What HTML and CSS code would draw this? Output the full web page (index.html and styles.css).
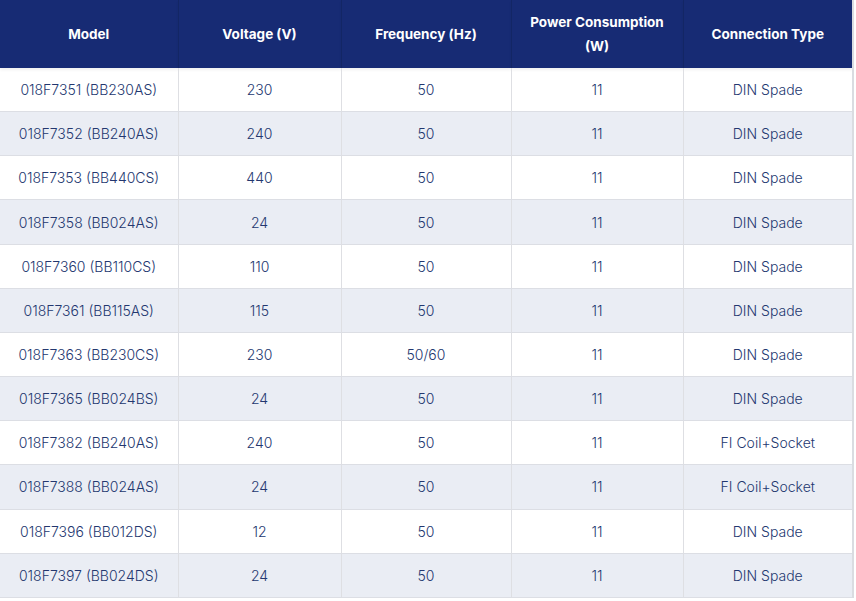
FILE: index.html
```html
<!DOCTYPE html>
<html lang="en">
<head>
<meta charset="utf-8">
<title>Models</title>
<link rel="stylesheet" href="styles.css">
</head>
<body>
<table class="spec">
  <colgroup>
    <col class="c1"><col class="c2"><col class="c3"><col class="c4"><col class="c5">
  </colgroup>
  <thead>
    <tr>
      <th>Model</th>
      <th>Voltage (V)</th>
      <th>Frequency (Hz)</th>
      <th>Power Consumption<br>(W)</th>
      <th>Connection Type</th>
    </tr>
  </thead>
  <tbody>
    <tr><td>018F7351 (BB230AS)</td><td>230</td><td>50</td><td>11</td><td>DIN Spade</td></tr>
    <tr><td>018F7352 (BB240AS)</td><td>240</td><td>50</td><td>11</td><td>DIN Spade</td></tr>
    <tr><td>018F7353 (BB440CS)</td><td>440</td><td>50</td><td>11</td><td>DIN Spade</td></tr>
    <tr><td>018F7358 (BB024AS)</td><td>24</td><td>50</td><td>11</td><td>DIN Spade</td></tr>
    <tr><td>018F7360 (BB110CS)</td><td>110</td><td>50</td><td>11</td><td>DIN Spade</td></tr>
    <tr><td>018F7361 (BB115AS)</td><td>115</td><td>50</td><td>11</td><td>DIN Spade</td></tr>
    <tr><td>018F7363 (BB230CS)</td><td>230</td><td>50/60</td><td>11</td><td>DIN Spade</td></tr>
    <tr><td>018F7365 (BB024BS)</td><td>24</td><td>50</td><td>11</td><td>DIN Spade</td></tr>
    <tr><td>018F7382 (BB240AS)</td><td>240</td><td>50</td><td>11</td><td>FI Coil+Socket</td></tr>
    <tr><td>018F7388 (BB024AS)</td><td>24</td><td>50</td><td>11</td><td>FI Coil+Socket</td></tr>
    <tr><td>018F7396 (BB012DS)</td><td>12</td><td>50</td><td>11</td><td>DIN Spade</td></tr>
    <tr><td>018F7397 (BB024DS)</td><td>24</td><td>50</td><td>11</td><td>DIN Spade</td></tr>
  </tbody>
</table>
</body>
</html>
```

FILE: styles.css
```css
html, body {
  margin: 0;
  padding: 0;
  background: #ffffff;
}

body {
  font-family: "Inter", "Open Sans", "Liberation Sans", sans-serif;
}

.spec {
  width: 853px;
  border-collapse: collapse;
  table-layout: fixed;
  border-right: 2px solid #dadce1;
}

.c1 { width: 178px; }
.c2 { width: 163px; }
.c3 { width: 170px; }
.c4 { width: 172px; }
.c5 { width: 170px; }

.spec th {
  height: 68px;
  padding: 0 6px;
  background: #172b74;
  color: #ffffff;
  font-size: 13.5px;
  font-weight: 700;
  line-height: 24px;
  text-align: center;
  vertical-align: middle;
  border-right: 1px solid #132665;
  box-shadow: 0 2px 3px rgba(0, 0, 0, 0.06);
}

.spec th:last-child {
  border-right: none;
}

.spec td {
  height: 43.17px;
  padding: 0 6px;
  color: #23376f;
  font-size: 14px;
  font-weight: 300;
  text-align: center;
  vertical-align: middle;
  border-right: 1px solid #dedfe3;
  border-bottom: 1px solid #dcdee4;
}

.spec td:last-child {
  border-right: none;
}

.spec tbody tr:nth-child(even) td {
  background: #eaedf4;
}
```
